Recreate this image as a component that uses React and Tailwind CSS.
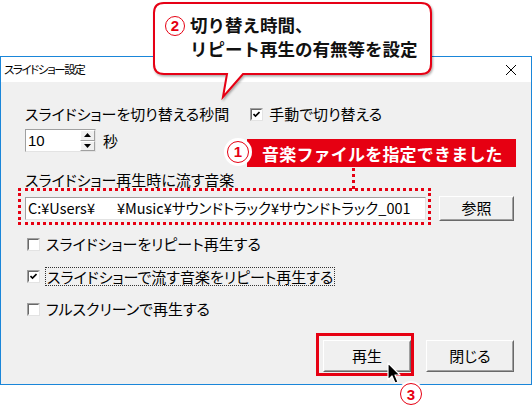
import React from 'react';

const jp = "font-['Noto_Sans_CJK_JP','Noto_Sans',sans-serif] [font-feature-settings:'palt']";

function CheckBox({ checked }) {
  return (
    <span className="w-[13px] h-[13px] border border-t-[#a0a0a0] border-l-[#a0a0a0] border-b-[#e3e3e3] border-r-[#e3e3e3] bg-white flex items-center justify-center shrink-0">
      <span className="w-[11px] h-[11px] border border-t-[#696969] border-l-[#696969] border-b-white border-r-white flex items-center justify-center">
        {checked && (
          <svg width="7" height="7" viewBox="0 0 7 7">
            <path d="M0.5 3 L2.5 5 L6.5 1" stroke="#000" strokeWidth="1.6" fill="none" />
          </svg>
        )}
      </span>
    </span>
  );
}

function Button({ children }) {
  return (
    <div className="w-[88px] h-[32px] bg-[#f0f0f0] border border-t-white border-l-white border-b-[#696969] border-r-[#696969]">
      <div className="w-full h-full border border-t-[#f0f0f0] border-l-[#f0f0f0] border-b-[#a0a0a0] border-r-[#a0a0a0] flex items-center justify-center text-[15px] text-black">
        {children}
      </div>
    </div>
  );
}

function Circle({ n, size }) {
  return (
    <span
      className="rounded-full bg-white flex items-center justify-center"
      style={{ width: size, height: size }}
    >
      <span className="w-[82%] h-[82%] rounded-full border-[1.5px] border-[#e60012] flex items-center justify-center text-[#e60012] font-bold leading-none font-['Liberation_Sans',sans-serif] text-[15px]">
        {n}
      </span>
    </span>
  );
}

export default function App() {
  return (
    <div className={`relative w-[532px] h-[408px] bg-white overflow-hidden text-black ${jp}`}>
      {/* dialog window */}
      <div className="mt-[56px] w-[532px] h-[329px] border border-[#1a86d9] flex flex-col">
        <div className="h-[25px] bg-white flex items-center justify-between pl-[3px] pr-[14px]">
          <span className="text-[11.5px] tracking-[-1.4px]">スライドショー設定</span>
          <svg width="12" height="12" viewBox="0 0 12 12">
            <path d="M1 1 L11 11 M11 1 L1 11" stroke="#000" strokeWidth="1" />
          </svg>
        </div>
        <div className="flex-1 bg-[#f0f0f0] pl-[24px] pr-[17px] pt-[22px] text-[15px] leading-[20px]">
          <div className="flex items-center h-[20px]">
            <span>スライドショーを切り替える秒間</span>
            <span className="ml-[21px] mr-[6px]"><CheckBox checked /></span>
            <span>手動で切り替える</span>
          </div>

          <div className="flex items-center mt-[5px] h-[23px]">
            <div className="w-[71px] h-[23px] bg-white border border-t-[#a0a0a0] border-l-[#a0a0a0] border-b-[#e3e3e3] border-r-[#e3e3e3] flex">
              <span className="flex-1 pl-[2px] leading-[21px] font-['Liberation_Sans',sans-serif] text-[15px]">10</span>
              <div className="w-[15px] flex flex-col">
                <div className="flex-1 bg-[#f0f0f0] border border-t-white border-l-white border-b-[#a0a0a0] border-r-[#a0a0a0] flex items-center justify-center">
                  <svg width="7" height="4" viewBox="0 0 7 4"><path d="M3.5 0 L7 4 L0 4 Z" fill="#000" /></svg>
                </div>
                <div className="flex-1 bg-[#f0f0f0] border border-t-white border-l-white border-b-[#a0a0a0] border-r-[#a0a0a0] flex items-center justify-center">
                  <svg width="7" height="4" viewBox="0 0 7 4"><path d="M0 0 L7 0 L3.5 4 Z" fill="#000" /></svg>
                </div>
              </div>
            </div>
            <span className="ml-[7px]">秒</span>
          </div>

          <div className="mt-[18px] h-[20px]">スライドショー再生時に流す音楽</div>

          <div className="flex items-center mt-[6px] h-[24px]">
            <div className="w-[401px] h-[23px] bg-white border border-t-[#a0a0a0] border-l-[#a0a0a0] border-b-[#e3e3e3] border-r-[#e3e3e3] flex items-center pl-[2px] overflow-hidden whitespace-nowrap text-[14.5px]">
              C:¥Users¥<span className="inline-block w-[22px]" />¥Music¥サウンドトラック¥サウンドトラック_001
            </div>
            <div className="ml-[13px]">
              <div className="w-[75px] h-[25px] bg-[#f0f0f0] border border-t-white border-l-white border-b-[#696969] border-r-[#696969]">
                <div className="w-full h-full border border-t-[#f0f0f0] border-l-[#f0f0f0] border-b-[#a0a0a0] border-r-[#a0a0a0] flex items-center justify-center">
                  参照
                </div>
              </div>
            </div>
          </div>

          <div className="flex items-center gap-[6px] mt-[14px] h-[20px] pl-[2px]">
            <CheckBox />
            <span>スライドショーをリピート再生する</span>
          </div>
          <div className="flex items-center gap-[5px] mt-[12px] h-[20px] pl-[2px]">
            <CheckBox checked />
            <span className="border border-dotted border-[#333] px-[1px] leading-[17px]">スライドショーで流す音楽をリピート再生する</span>
          </div>
          <div className="flex items-center gap-[6px] mt-[13px] h-[20px] pl-[2px]">
            <CheckBox />
            <span>フルスクリーンで再生する</span>
          </div>

          <div className="flex justify-end gap-[15px] mt-[21px]">
            <Button>再生</Button>
            <Button>閉じる</Button>
          </div>
        </div>
      </div>

      {/* callout ② */}
      <svg className="absolute left-0 top-0" width="532" height="110" viewBox="0 0 532 110">
        <defs>
          <filter id="sh" x="-10%" y="-10%" width="120%" height="130%">
            <feDropShadow dx="1" dy="1.5" stdDeviation="1.2" floodColor="#000" floodOpacity="0.35" />
          </filter>
        </defs>
        <path
          d="M164 3 H421 Q431 3 431 13 V64 Q431 74 421 74 H243 L223 97 L227 74 H164 Q154 74 154 64 V13 Q154 3 164 3 Z"
          fill="#fff"
          stroke="#e60012"
          strokeWidth="2"
          filter="url(#sh)"
        />
      </svg>
      <div className="absolute left-[163px] top-[14px] flex items-center">
        <Circle n="2" size={24} />
      </div>
      <div className="absolute left-[190px] top-[13px] font-bold text-[17.5px] leading-[24px] font-['Noto_Sans_CJK_JP',sans-serif] [font-feature-settings:normal] text-[#111]">
        <div>切り替え時間、</div>
        <div>リピート再生の有無等を設定</div>
      </div>

      {/* label ① */}
      <div className="absolute left-[247px] top-[139px] w-[269px] h-[28px] bg-[#e60012] flex items-center pl-[15px]">
        <span className="text-white font-bold text-[17px] leading-none font-['Noto_Sans_CJK_JP',sans-serif] [font-feature-settings:normal] tracking-[0.2px]">音楽ファイルを指定できました</span>
      </div>
      <div className="absolute left-[224px] top-[138px]">
        <Circle n="1" size={28} />
      </div>
      <div className="absolute left-[352px] top-[168px] h-[21px] border-l-[3px] border-dotted border-[#e60012]" />
      <div className="absolute left-[18px] top-[188px] w-[413px] h-[37px] border-[3px] border-dotted border-[#e60012]" />

      {/* ③ play button highlight */}
      <div className="absolute left-[316px] top-[333px] w-[98px] h-[43px] border-[3px] border-[#e60012]" />
      <svg className="absolute left-[386px] top-[362px]" width="16" height="26" viewBox="0 0 16 26">
        <path d="M2 1 L2 18 L6 14 L9 21 L12 20 L9 13 L14 13 Z" fill="#000" stroke="#fff" strokeWidth="1.2" strokeLinejoin="round" />
      </svg>
      <div className="absolute left-[398px] top-[381px]">
        <Circle n="3" size={26} />
      </div>
    </div>
  );
}
